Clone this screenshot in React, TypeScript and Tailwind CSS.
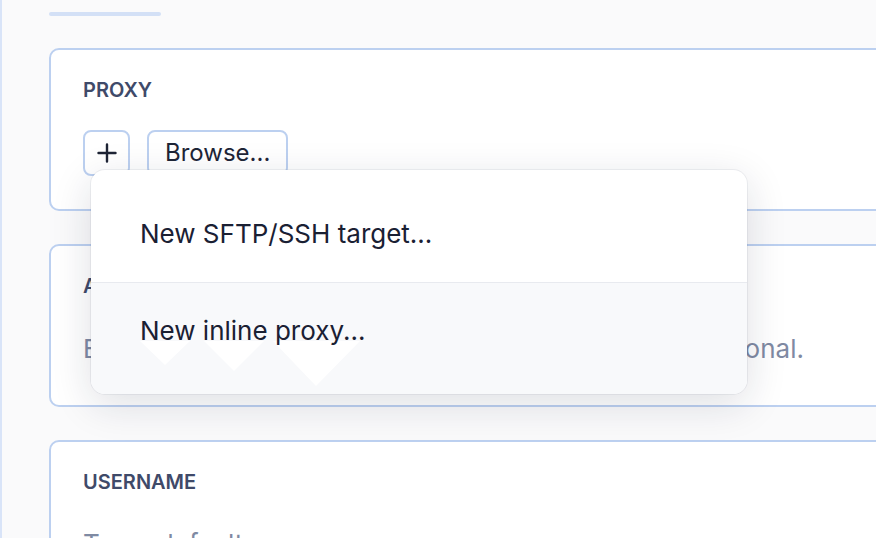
import React from "react";

function Card({ label, children }: { label: string; children?: React.ReactNode }) {
  return (
    <div className="ml-[47px] h-[163px] w-[860px] rounded-[10px] border-2 border-[#bcd0f0] bg-white px-[32px] pt-[25px]">
      <p className="text-[20px] font-semibold leading-[30px] text-[#3f4a69]">{label}</p>
      {children}
    </div>
  );
}

function PlusIcon() {
  return (
    <svg width="22" height="22" viewBox="0 0 22 22" fill="none" stroke="#1e2435" strokeWidth="2.4" strokeLinecap="round">
      <path d="M11 2.5v17M2.5 11h17" />
    </svg>
  );
}

export default function App() {
  return (
    <div
      className="relative h-[538px] w-full overflow-hidden border-l-2 border-[#d9e4f8] bg-[#fafafb]"
      style={{ fontFamily: "Inter, 'Noto Sans', sans-serif" }}
    >
      <div className="ml-[47px] mt-[12px] h-[4px] w-[112px] rounded-full bg-[#d3e0f6]" />

      <div className="mt-[32px] flex flex-col gap-[33px]">
        <Card label="PROXY">
          <div className="mt-[25px] flex items-center gap-[17px]">
            <button className="flex h-[46px] w-[47px] items-center justify-center rounded-[8px] border-2 border-[#bcd0f0] bg-white">
              <PlusIcon />
            </button>
            <button className="flex h-[46px] items-center rounded-[8px] border-2 border-[#bcd0f0] bg-white px-[16px] text-[24px] text-[#1e2537]">
              Browse...
            </button>
          </div>
        </Card>

        <Card label="AUTHENTICATION">
          <p className="mt-[28px] whitespace-nowrap text-[26px] leading-[39px] text-[#7f8aa3]">
            Enter a password or select a private key. Both are optional.
          </p>
        </Card>

        <Card label="USERNAME">
          <p className="mt-[27px] whitespace-nowrap text-[26px] leading-[39px] text-[#7f8aa3]">
            Team default
          </p>
        </Card>
      </div>

      {/* dropdown for the + button */}
      <div className="absolute left-[89px] top-[170px] w-[656px] overflow-hidden rounded-[14px] bg-white shadow-[0_0_0_1px_rgba(20,30,60,0.06),0_10px_40px_rgba(20,30,60,0.14)]">
        <div className="h-[113px] border-b border-[#e8eaef] pl-[49px] pt-[44px] text-[26px] leading-[39px] text-[#1a2033]">
          New SFTP/SSH target...
        </div>
        <div className="relative h-[111px] bg-[#f8f9fb] pl-[49px] pt-[28px] text-[26px] leading-[39px] text-[#1a2033]">
          <svg className="absolute left-0 top-0" width="400" height="111" viewBox="0 0 400 111">
            <path d="M49 58h50l-25 24zM113 58h60l-30 30zM182 58h87l-44 45z" fill="#ffffff" />
          </svg>
          <span className="relative">New inline proxy...</span>
        </div>
      </div>
    </div>
  );
}
